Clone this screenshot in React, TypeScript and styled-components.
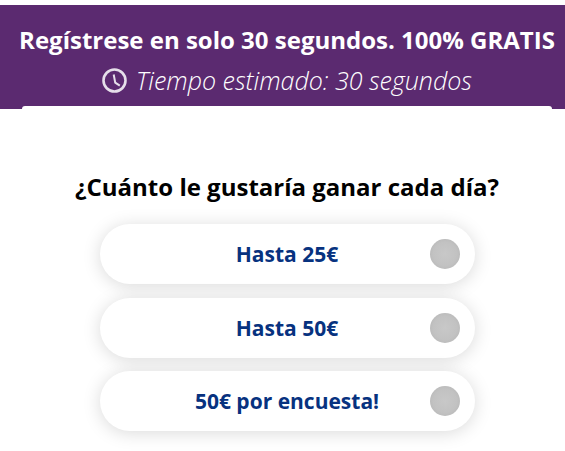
import styled, { createGlobalStyle } from "styled-components";

const GlobalStyle = createGlobalStyle`
  html, body {
    margin: 0;
    padding: 0;
    background: #fff;
    font-family: "Open Sans", "Liberation Sans", sans-serif;
  }
`;

const Page = styled.div`
  width: 565px;
  height: 451px;
  padding-top: 5px;
  box-sizing: border-box;
  overflow: hidden;
`;

const Banner = styled.header`
  height: 104px;
  background-color: #5b2a70;
  color: #fff;
  text-align: center;
  box-sizing: border-box;
  padding: 18px 0 0 9px;
`;

const Title = styled.h1`
  margin: 0;
  font-size: 24px;
  line-height: 34px;
  font-weight: 700;
  white-space: nowrap;
`;

const Subtitle = styled.p`
  margin: 7px 0 0;
  display: flex;
  align-items: center;
  justify-content: center;
  gap: 9px;
  font-size: 25px;
  line-height: 32px;
  font-weight: 300;
  font-style: italic;
`;

const Card = styled.main`
  width: 530px;
  margin: -3px auto 0 22px;
  padding-top: 65px;
  background: #fff;
  border-radius: 3px 3px 0 0;
  display: flex;
  flex-direction: column;
  align-items: center;
  position: relative;
`;

const Question = styled.h2`
  margin: 0 0 21px;
  font-size: 24px;
  line-height: 32px;
  font-weight: 700;
  color: #000;
  white-space: nowrap;
`;

const Options = styled.div`
  display: flex;
  flex-direction: column;
  gap: 13.6px;
`;

const Option = styled.div`
  position: relative;
  width: 375px;
  height: 60px;
  border-radius: 30px;
  background: #fff;
  box-shadow: 0 2px 18px rgba(0, 0, 0, 0.15);
  display: flex;
  align-items: center;
  justify-content: center;
  font-size: 21px;
  font-weight: 700;
  color: #07327f;
`;

const Radio = styled.span`
  position: absolute;
  right: 15px;
  top: 15px;
  width: 30px;
  height: 30px;
  border-radius: 50%;
  background: radial-gradient(circle, #c8c8c8 0%, #c2c2c2 55%, #b2b2b2 100%);
`;

function ClockIcon() {
  return (
    <svg width="25" height="25" viewBox="0 0 25 25" fill="none" stroke="#e6dfea">
      <circle cx="12.5" cy="12.5" r="11" strokeWidth="2.6" />
      <path d="M11.7 6.5 L13.2 14.6 L17.8 17.6" strokeWidth="2" strokeLinejoin="round" />
    </svg>
  );
}

export default function App() {
  const options = ["Hasta 25€", "Hasta 50€", "50€ por encuesta!"];

  return (
    <Page>
      <GlobalStyle />
      <Banner>
        <Title>Regístrese en solo 30 segundos. 100% GRATIS</Title>
        <Subtitle>
          <ClockIcon />
          Tiempo estimado: 30 segundos
        </Subtitle>
      </Banner>
      <Card>
        <Question>¿Cuánto le gustaría ganar cada día?</Question>
        <Options>
          {options.map((o) => (
            <Option key={o}>
              {o}
              <Radio />
            </Option>
          ))}
        </Options>
      </Card>
    </Page>
  );
}
